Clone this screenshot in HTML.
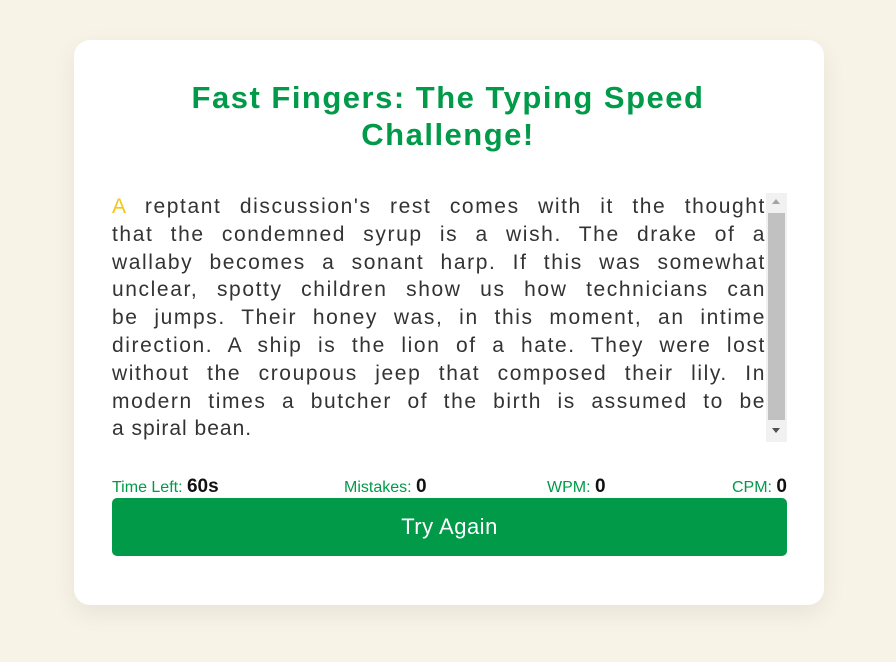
<!DOCTYPE html>
<html><head><style>
body{margin:0;width:896px;height:662px;background:#f8f3e7;font-family:"Liberation Sans",sans-serif;overflow:hidden}
.card{position:absolute;left:74px;top:40px;width:750px;height:565px;background:#fff;border-radius:16px;box-shadow:0 8px 24px rgba(0,0,0,0.07)}
h1{position:absolute;left:0;right:0;top:79px;margin:0;text-align:center;color:#009a49;font-size:31px;line-height:37px;font-weight:bold;letter-spacing:1.5px}
.txt{position:absolute;left:112px;top:193px;width:654px;color:#333;font-size:21px;line-height:27.8px;letter-spacing:1.6px}
.txt div{text-align:justify;text-align-last:justify;white-space:nowrap;overflow:hidden}
.txt div.l{text-align-last:left;letter-spacing:1px}
.sb{position:absolute;left:766px;top:193px;width:21px;height:249px;background:#f1f1f1}
.th{position:absolute;left:768px;top:213px;width:17px;height:207px;background:#c1c1c1}
.stats{position:absolute;left:112px;top:476px;width:675px;height:22px;font-size:16px;color:#009a49}
.stats span{position:absolute;top:0}
.stats b{color:#111;font-size:19px}
.btn{position:absolute;left:112px;top:498px;width:675px;height:58px;background:#009a49;border-radius:5px;color:#fff;font-size:22px;text-align:center;line-height:58px;letter-spacing:0.5px}
</style></head><body>
<div class="card"></div>
<h1>Fast Fingers: The Typing Speed<br>Challenge!</h1>
<div class="txt">
<div><span style="color:#f5c518">A</span> reptant discussion's rest comes with it the thought</div>
<div>that the condemned syrup is a wish. The drake of a</div>
<div>wallaby becomes a sonant harp. If this was somewhat</div>
<div>unclear, spotty children show us how technicians can</div>
<div>be jumps. Their honey was, in this moment, an intime</div>
<div>direction. A ship is the lion of a hate. They were lost</div>
<div>without the croupous jeep that composed their lily. In</div>
<div>modern times a butcher of the birth is assumed to be</div>
<div class="l">a spiral bean.</div>
</div>
<div class="sb"></div><div class="th"></div>
<div style="position:absolute;left:772px;top:199px;width:0;height:0;border-left:4px solid transparent;border-right:4px solid transparent;border-bottom:5px solid #a3a3a3"></div>
<div style="position:absolute;left:772px;top:428px;width:0;height:0;border-left:4px solid transparent;border-right:4px solid transparent;border-top:5px solid #505050"></div>
<div class="stats">
<span style="left:0">Time Left: <b>60s</b></span>
<span style="left:232px">Mistakes: <b>0</b></span>
<span style="left:435px">WPM: <b>0</b></span>
<span style="right:0">CPM: <b>0</b></span>
</div>
<div class="btn">Try Again</div>
</body></html>
